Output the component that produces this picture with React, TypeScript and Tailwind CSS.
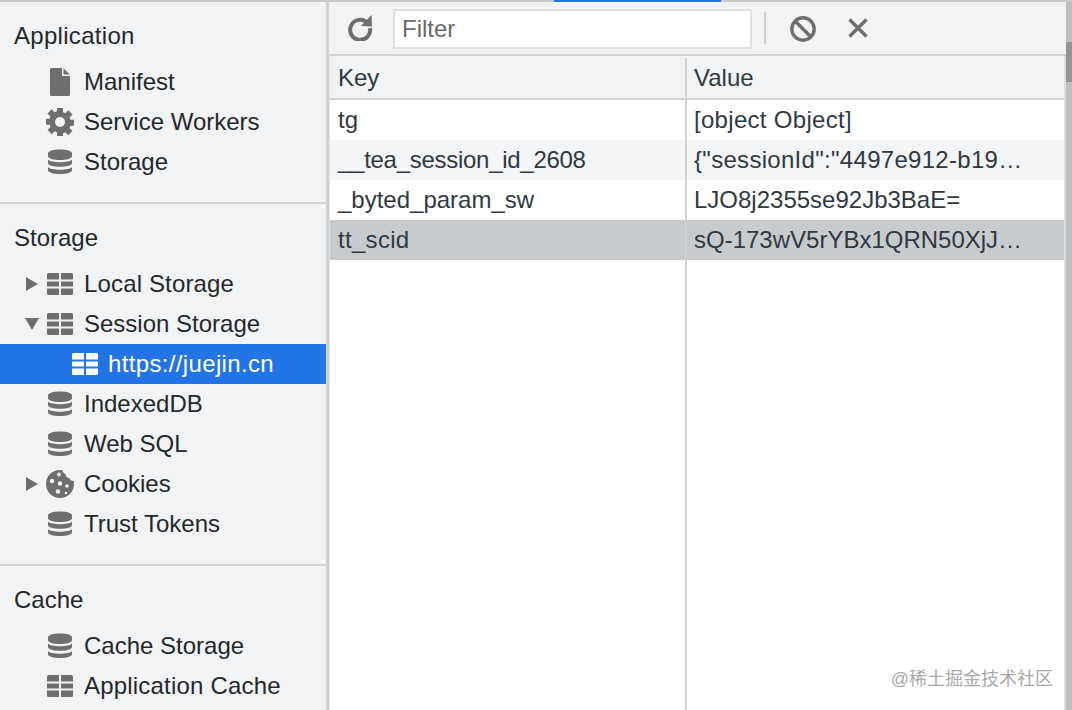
const DB = () => (
  <svg width="24" height="26" viewBox="0 0 24 26" fill="#6e6e6e">
    <path d="M0 4.500C0 2 5.400 0.500 12 0.500s12 1.500 12 4v2.500c0 2.500-5.400 4-12 4S0 9.500 0 7z" />
    <path d="M0 10.500c1.500 1.800 6.500 2.700 12 2.700s10.500-.9 12-2.700v3.500c0 2.300-5.400 3.800-12 3.800S0 16.300 0 14z" />
    <path d="M0 18c1.500 1.800 6.500 2.700 12 2.700S22.500 19.800 24 18v3c0 2.500-5.400 4-12 4S0 23.500 0 21z" />
  </svg>
);

const Grid = ({ color = "#6e6e6e" }: { color?: string }) => (
  <svg width="26" height="22" viewBox="0 0 26 22" fill={color}>
    <path d="M1.500 0H12v6.500H0V1.500A1.500 1.500 0 0 1 1.500 0z" />
    <path d="M14 0h10.500A1.500 1.500 0 0 1 26 1.500v5H14z" />
    <rect x="0" y="8.500" width="12" height="5" />
    <rect x="14" y="8.500" width="12" height="5" />
    <path d="M0 15.500h12V22H1.500A1.500 1.500 0 0 1 0 20.500z" />
    <path d="M14 15.500h12v5a1.500 1.500 0 0 1-1.500 1.500H14z" />
  </svg>
);

const Doc = () => (
  <svg width="20" height="28" viewBox="0 0 20 28" fill="#6e6e6e">
    <path d="M1.500 0H12v8h8v18.500a1.500 1.500 0 0 1-1.500 1.500h-17A1.500 1.500 0 0 1 0 26.500v-25A1.500 1.500 0 0 1 1.500 0z" />
    <path d="M13.500 0.500 20 6.500h-6.500z" />
  </svg>
);

const Gear = () => (
  <svg width="28" height="28" viewBox="0 0 28 28">
    <path
      fill="#6e6e6e"
      fillRule="evenodd"
      d="M11 0h6v4.200l2.300 1 3-3 4.200 4.200-3 3 1 2.300H28v6h-3.500l-1 2.300 3 3-4.200 4.200-3-3-2.300 1V28h-6v-3.800l-2.300-1-3 3-4.200-4.200 3-3-1-2.300H0v-6h3.500l1-2.300-3-3 4.200-4.200 3 3 2.300-1zM14 9a5 5 0 1 0 0 10 5 5 0 0 0 0-10z"
    />
  </svg>
);

const Cookie = () => (
  <svg width="28" height="28" viewBox="0 0 28 28">
    <path
      fill="#6e6e6e"
      d="M14 0c1 0 1.800.1 2.500.3.200 2 1.400 3.400 3 3.800.1 2.300 1.700 4 4 4.200.3 1.500 1.800 2.600 4.300 2.700.1 1 .2 2 .2 3A14 14 0 1 1 14 0z"
    />
    <circle cx="13" cy="4.500" r="2" fill="#f1f3f5" />
    <circle cx="6" cy="11" r="2.200" fill="#f1f3f5" />
    <circle cx="14" cy="13.500" r="2.200" fill="#f1f3f5" />
    <circle cx="21" cy="16" r="1.800" fill="#f1f3f5" />
    <circle cx="12" cy="21.500" r="2.200" fill="#f1f3f5" />
    <circle cx="20" cy="23" r="1.300" fill="#f1f3f5" />
  </svg>
);

const ArrowRight = () => (
  <svg width="12" height="14" viewBox="0 0 12 14" fill="#6e6e6e">
    <path d="M0 0l12 7-12 7z" />
  </svg>
);

const ArrowDown = () => (
  <svg width="14" height="12" viewBox="0 0 14 12" fill="#6e6e6e">
    <path d="M0 0h14L7 12z" />
  </svg>
);

const Row = ({
  icon,
  label,
  arrow,
  selected,
  labelClass = "",
}: {
  icon: React.ReactNode;
  label: string;
  arrow?: "right" | "down";
  selected?: boolean;
  labelClass?: string;
}) => (
  <div
    className={
      selected
        ? "flex h-10 items-center bg-[#2374e6] text-white"
        : "flex h-10 items-center text-[#25282b]"
    }
  >
    <div className={selected ? "w-[47px] shrink-0" : "w-[22px] shrink-0"} />
    <div className="flex w-[20px] shrink-0 items-center justify-center">
      {arrow === "right" && <ArrowRight />}
      {arrow === "down" && <ArrowDown />}
    </div>
    <div className="ml-[2px] flex w-[32px] shrink-0 items-center justify-center">{icon}</div>
    <span className={`${selected ? "ml-[7px]" : "ml-[8px]"} whitespace-nowrap ${labelClass}`}>{label}</span>
  </div>
);

const Heading = ({ children, className = "" }: { children: string; className?: string }) => (
  <div className={`flex h-10 items-center pl-[14px] text-[#25282b] ${className}`}>{children}</div>
);

const Sidebar = () => (
  <aside className="flex h-[708px] w-[329px] shrink-0 flex-col overflow-hidden border-r-[3px] border-[#d0d2d4] bg-[#f1f3f5]">
    <section className="border-b-2 border-[#d0d2d4] pt-[14px] pb-[20px]">
      <Heading className="tracking-[0.3px]">Application</Heading>
      <div className="mt-[6px]">
        <Row icon={<Doc />} label="Manifest" />
        <Row icon={<Gear />} label="Service Workers" />
        <Row icon={<DB />} label="Storage" />
      </div>
    </section>
    <section className="border-b-2 border-[#d0d2d4] pt-[14px] pb-[20px]">
      <Heading>Storage</Heading>
      <div className="mt-[6px]">
        <Row icon={<Grid />} label="Local Storage" arrow="right" labelClass="tracking-[0.15px]" />
        <Row icon={<Grid />} label="Session Storage" arrow="down" />
        <Row icon={<Grid color="#ffffff" />} label="https://juejin.cn" selected labelClass="tracking-[0.35px]" />
        <Row icon={<DB />} label="IndexedDB" />
        <Row icon={<DB />} label="Web SQL" />
        <Row icon={<Cookie />} label="Cookies" arrow="right" />
        <Row icon={<DB />} label="Trust Tokens" />
      </div>
    </section>
    <section className="pt-[14px]">
      <Heading>Cache</Heading>
      <div className="mt-[6px]">
        <Row icon={<DB />} label="Cache Storage" />
        <Row icon={<Grid />} label="Application Cache" labelClass="tracking-[0.2px]" />
      </div>
    </section>
  </aside>
);

const Toolbar = () => (
  <div className="flex h-[54px] shrink-0 items-center border-b-2 border-[#d0d2d4] bg-[#f1f3f5] pt-[2px]">
    <svg className="mb-[2px] ml-[18px]" width="26" height="26" viewBox="0 0 26 26" fill="none">
      <path d="M20.500 8A10 10 0 1 0 23 13" stroke="#6e6e6e" strokeWidth="4" />
      <path d="M14 11 25 11.500 24.500 0z" fill="#6e6e6e" />
    </svg>
    <div className="ml-[20px] flex h-10 w-[359px] items-center border-2 border-[#dfe1e3] bg-white pl-[7px] text-[#6a6a6a]">
      Filter
    </div>
    <div className="mb-[2px] ml-[12px] h-8 w-[2px] bg-[#ccced0]" />
    <svg className="ml-[24px]" width="26" height="26" viewBox="0 0 26 26" fill="none">
      <circle cx="13" cy="13" r="11.200" stroke="#6e6e6e" strokeWidth="3.400" />
      <path d="M5 5l16 16" stroke="#6e6e6e" strokeWidth="3.400" />
    </svg>
    <svg className="mb-[2px] ml-[32px]" width="20" height="20" viewBox="0 0 20 20" fill="none">
      <path d="M1.500 1.500l17 17M18.500 1.500l-17 17" stroke="#6e6e6e" strokeWidth="3.400" />
    </svg>
  </div>
);

const rows: { k: string; v: string; bg: string; kc?: string; vc?: string }[] = [
  { k: "tg", v: "[object Object]", bg: "bg-white", vc: "tracking-[0.3px]" },
  {
    k: "__tea_session_id_2608",
    v: '{"sessionId":"4497e912-b19…',
    bg: "bg-[#f2f4f6]",
    kc: "tracking-[-0.28px]",
    vc: "tracking-[0.3px]",
  },
  { k: "_byted_param_sw", v: "LJO8j2355se92Jb3BaE=", bg: "bg-white" },
  { k: "tt_scid", v: "sQ-173wV5rYBx1QRN50XjJ…", bg: "bg-[#c8cbcd]", kc: "tracking-[0.3px]" },
];

const Table = () => (
  <div className="flex min-h-0 flex-1 flex-col overflow-hidden bg-[#dcdedf] pl-[1px] pr-[2px]">
    <div className="flex h-[44px] shrink-0 border-b-2 border-[#d0d2d4] bg-[#f1f3f5] pt-[2px] text-[#303942]">
      <div className="flex w-[357px] shrink-0 items-center border-r-2 border-[#d0d2d4] pl-2">Key</div>
      <div className="flex items-center pl-[7px]">Value</div>
    </div>
    <div className="relative flex-1 bg-white">
      {rows.map((r) => (
        <div key={r.k} className={`flex h-10 items-center text-[#303942] ${r.bg}`}>
          <div className={`w-[355px] shrink-0 pl-2 whitespace-nowrap ${r.kc ?? ""}`}>{r.k}</div>
          <div className={`pl-[9px] whitespace-nowrap ${r.vc ?? ""}`}>{r.v}</div>
        </div>
      ))}
      <div className="absolute top-0 bottom-0 left-[355px] w-[2px] bg-[#d0d2d4]" />
    </div>
  </div>
);

const Scrollbar = () => (
  <div className="w-[6px] shrink-0 bg-[#bcbec0]">
    <div className="mt-[40px] h-[40px] bg-[#919395]" />
  </div>
);

export default function App() {
  return (
    <div
      className="relative h-[710px] w-[1072px] overflow-hidden bg-white text-[24px] leading-none"
      style={{ fontFamily: '"Liberation Sans", Arial, sans-serif' }}
    >
      <div className="flex h-[2px] bg-[#c8cacc]">
        <div className="ml-[554px] w-[167px] bg-[#2374e6]" />
      </div>
      <div className="flex h-[708px]">
        <Sidebar />
        <main className="flex min-w-0 flex-1 flex-col">
          <Toolbar />
          <Table />
        </main>
        <Scrollbar />
      </div>
      <div
        className="absolute top-[670px] right-[19px] text-[18px] text-[#a9a9a9]"
        style={{ fontFamily: '"Liberation Sans", "Noto Sans CJK SC", sans-serif' }}
      >
        @稀土掘金技术社区
      </div>
    </div>
  );
}
